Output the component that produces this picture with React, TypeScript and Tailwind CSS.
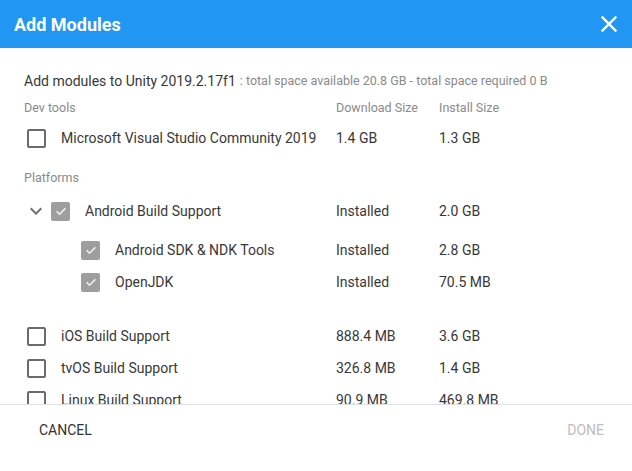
import React from "react";

const font = { fontFamily: "Roboto, 'Noto Sans', Arial, sans-serif" };

function Box({ checked }: { checked?: boolean }) {
  if (checked) {
    return (
      <div className="w-[19px] h-[19px] rounded-[2px] bg-[#9e9e9e] flex items-center justify-center shrink-0">
        <svg width="14" height="14" viewBox="0 0 24 24">
          <path d="M4.5 12.5l5 5 10-10" fill="none" stroke="#f2f2f2" strokeWidth="2.6" />
        </svg>
      </div>
    );
  }
  return <div className="w-[19px] h-[19px] rounded-[2px] border-2 border-[#6b6b6b] shrink-0" />;
}

function Chevron() {
  return (
    <svg width="24" height="24" viewBox="0 0 24 24" className="shrink-0">
      <path d="M16.59 8.59L12 13.17 7.41 8.59 6 10l6 6 6-6z" fill="#707070" />
    </svg>
  );
}

function Row({
  indent,
  name,
  dl,
  inst,
  checked,
  chevron,
  top,
}: {
  indent: number;
  name: string;
  dl: string;
  inst: string;
  checked?: boolean;
  chevron?: boolean;
  top?: string;
}) {
  return (
    <div className={`flex items-center h-[32px] text-[14px] text-[#383838] ${top ?? ""}`}>
      <div className="w-[312px] flex items-center shrink-0">
        {indent === 0 && <div className="w-[3px]" />}
        {indent === 2 && <div className="w-[57px]" />}
        {chevron && (
          <div className="mr-[3px]">
            <Chevron />
          </div>
        )}
        <Box checked={checked} />
        <span className="ml-[15px] whitespace-nowrap">{name}</span>
      </div>
      <div className="w-[103px] shrink-0 whitespace-nowrap">{dl}</div>
      <div className="whitespace-nowrap">{inst}</div>
    </div>
  );
}

export default function App() {
  return (
    <div style={font} className="w-[632px] h-[471px] bg-white flex flex-col overflow-hidden">
      <div className="h-[48px] bg-[#2196f3] flex items-center justify-between pl-[14px] pr-[9px] shrink-0">
        <span className="text-white text-[18px] font-bold">Add Modules</span>
        <svg width="28" height="28" viewBox="0 0 24 24">
          <path
            d="M19 6.41L17.59 5 12 10.59 6.41 5 5 6.41 10.59 12 5 17.59 6.41 19 12 13.41 17.59 19 19 17.59 13.41 12z"
            fill="#fff"
          />
        </svg>
      </div>

      <div className="h-[356px] overflow-hidden pl-[24px] pt-[23px] shrink-0">
        <div className="h-[20px] flex items-center whitespace-nowrap">
          <span className="text-[14px] text-[#383838]">Add modules to Unity 2019.2.17f1</span>
          <span className="text-[12.5px] text-[#8a8a8a] ml-[4px]">
            : total space available 20.8 GB - total space required 0 B
          </span>
        </div>

        <div className="mt-[9px] h-[16px] flex items-center text-[12.5px] text-[#8a8a8a]">
          <div className="w-[312px]">Dev tools</div>
          <div className="w-[103px]">Download Size</div>
          <div>Install Size</div>
        </div>

        <Row indent={0} name="Microsoft Visual Studio Community 2019" dl="1.4 GB" inst="1.3 GB" top="mt-[6px]" />

        <div className="mt-[16px] h-[16px] flex items-center text-[12.5px] text-[#8a8a8a]">Platforms</div>

        <Row indent={1} chevron checked name="Android Build Support" dl="Installed" inst="2.0 GB" top="mt-[9px]" />
        <Row indent={2} checked name="Android SDK & NDK Tools" dl="Installed" inst="2.8 GB" top="mt-[7px]" />
        <Row indent={2} checked name="OpenJDK" dl="Installed" inst="70.5 MB" />

        <Row indent={0} name="iOS Build Support" dl="888.4 MB" inst="3.6 GB" top="mt-[22px]" />
        <Row indent={0} name="tvOS Build Support" dl="326.8 MB" inst="1.4 GB" />
        <Row indent={0} name="Linux Build Support" dl="90.9 MB" inst="469.8 MB" />
      </div>

      <div className="flex-1 border-t border-[#e0e0e0] flex items-start justify-between pl-[23px] pr-[12px] pt-[7px]">
        <button className="h-[36px] px-[16px] text-[14px] font-normal text-[#333] uppercase">Cancel</button>
        <button className="h-[36px] px-[16px] text-[14px] font-normal text-[#bdbdbd] uppercase">Done</button>
      </div>
    </div>
  );
}
